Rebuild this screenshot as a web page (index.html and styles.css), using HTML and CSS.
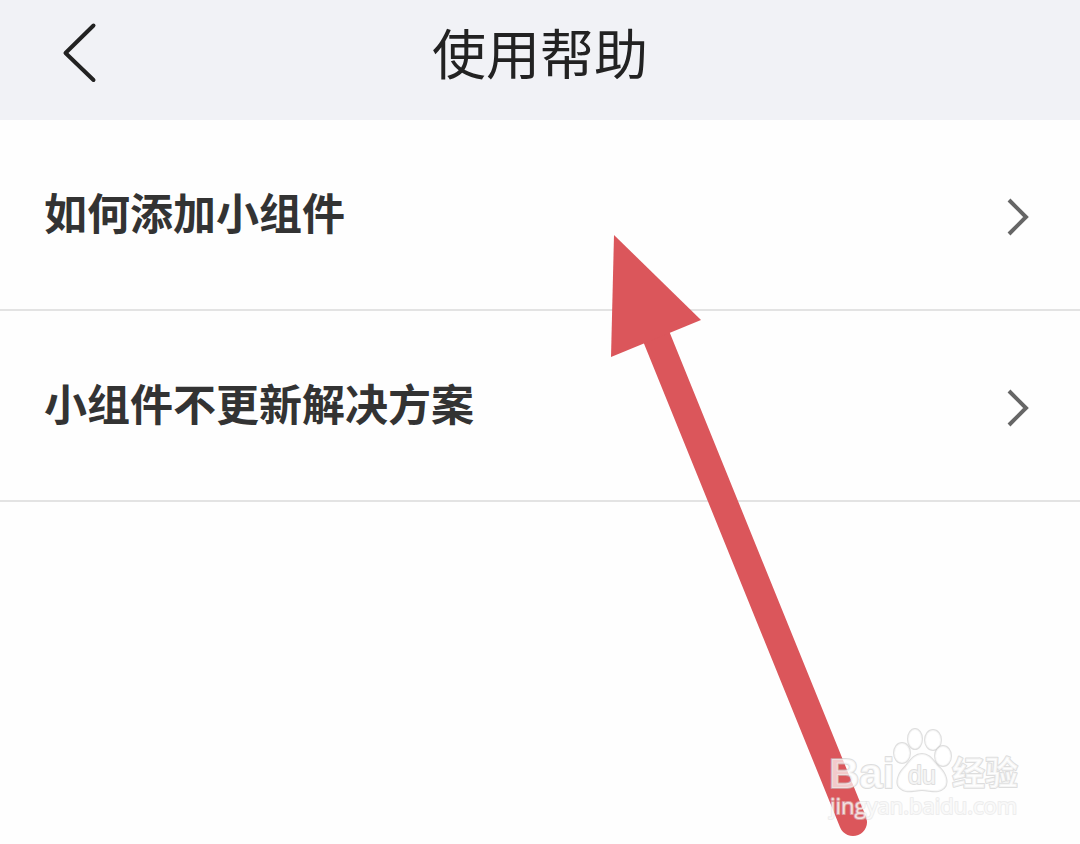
FILE: index.html
```
<!DOCTYPE html>
<html lang="zh-CN">
<head>
    <meta charset="UTF-8">
    <meta name="viewport" content="width=device-width, initial-scale=1.0">
    <title>使用帮助</title>
    <link rel="stylesheet" href="styles.css">
</head>
<body>
    <header class="header">
        <button class="back" type="button" aria-label="返回">
            <svg width="40" height="64" viewBox="0 0 40 64">
                <path d="M33.5 4.5 L5.5 32 L33.5 59"/>
            </svg>
        </button>
        <h1 class="title">使用帮助</h1>
    </header>

    <main class="list">
        <a class="item" href="#add">
            <span class="label">如何添加小组件</span>
            <svg class="chevron" width="24" height="40" viewBox="0 0 24 40">
                <path d="M3 3 L20 20 L3 37"/>
            </svg>
        </a>
        <a class="item" href="#update">
            <span class="label">小组件不更新解决方案</span>
            <svg class="chevron" width="24" height="40" viewBox="0 0 24 40">
                <path d="M3 3 L20 20 L3 37"/>
            </svg>
        </a>
    </main>

    <!-- pointer to the first item -->
    <svg class="arrow" width="260" height="604" viewBox="0 0 260 604" aria-hidden="true">
        <path class="arrow-shaft" d="M46 102 L243 588"/>
        <path class="arrow-head" d="M4 1 L91 86 L1 123 Z"/>
    </svg>

    <!-- watermark -->
    <svg class="watermark" width="204" height="100" viewBox="0 0 204 100">
        <text class="mark-bai" x="5" y="63">Bai</text>
        <g class="paw">
            <ellipse cx="78" cy="28" rx="8" ry="10"/>
            <ellipse cx="91" cy="14" rx="7" ry="10"/>
            <ellipse cx="109" cy="15" rx="8" ry="10"/>
            <ellipse cx="119" cy="31" rx="8" ry="10"/>
            <path d="M98 29 C89 29 85 38 80 43 C74 49 71 59 76 63 C82 69 90 65 98 65 C106 65 114 69 120 63 C125 58 122 49 116 43 C110 38 107 29 98 29 Z"/>
        </g>
        <text class="mark-du" x="84" y="59">du</text>
        <text class="mark-cn" x="128" y="60">经验</text>
        <text class="mark-url" x="6" y="89">jingyan.baidu.com</text>
    </svg>
</body>
</html>
```
FILE: styles.css
```
body {
    margin: 0;
    position: relative;
    min-height: 100vh;
    background-color: #fefefe;
    color: #333;
    font-family: "Noto Sans CJK SC", sans-serif;
}

.header {
    display: grid;
    grid-template-columns: 120px 1fr 120px;
    align-items: center;
    height: 120px;
    background-color: #f1f2f6;
}
.back {
    align-self: start;
    justify-self: center;
    padding: 21px 0 0;
    border: 0;
    background: none;
    cursor: pointer;
}
.back svg {
    display: block;
    margin-left: 40px;
}
.back path {
    fill: none;
    stroke: #222;
    stroke-width: 4;
    stroke-linecap: round;
    stroke-linejoin: round;
}
.title {
    margin: 0;
    padding-bottom: 16px;
    color: #222;
    font-size: 54px;
    font-weight: 400;
    line-height: 80px;
    text-align: center;
}

.item {
    display: flex;
    justify-content: space-between;
    align-items: center;
    height: 189px;
    padding: 0 50px 0 44px;
    border-bottom: 2px solid #e3e3e3;
    color: #333;
    font-size: 43px;
    font-weight: 700;
    line-height: 64px;
    text-decoration: none;
}
.label {
    padding-bottom: 8px;
}
.chevron {
    margin-top: 4px;
}
.chevron path {
    fill: none;
    stroke: #666;
    stroke-width: 4;
}

.arrow {
    position: absolute;
    top: 234px;
    left: 610px;
    pointer-events: none;
}
.arrow-shaft {
    stroke: #db565b;
    stroke-width: 28;
    stroke-linecap: round;
}
.arrow-head {
    fill: #db565b;
}

.watermark {
    position: absolute;
    top: 725px;
    left: 824px;
    pointer-events: none;
    fill: rgba(255, 255, 255, 0.7);
    stroke: rgba(200, 200, 200, 0.6);
    stroke-width: 2;
    stroke-linejoin: round;
    paint-order: stroke;
}
.mark-bai {
    font: 700 42px "Liberation Sans", sans-serif;
}
.mark-du {
    font: 400 25px "Liberation Sans", sans-serif;
}
.mark-cn {
    font: 700 33px "Noto Sans CJK SC", sans-serif;
}
.mark-url {
    font: 400 22px "Open Sans", sans-serif;
    stroke: rgba(220, 220, 220, 0.5);
}
```
